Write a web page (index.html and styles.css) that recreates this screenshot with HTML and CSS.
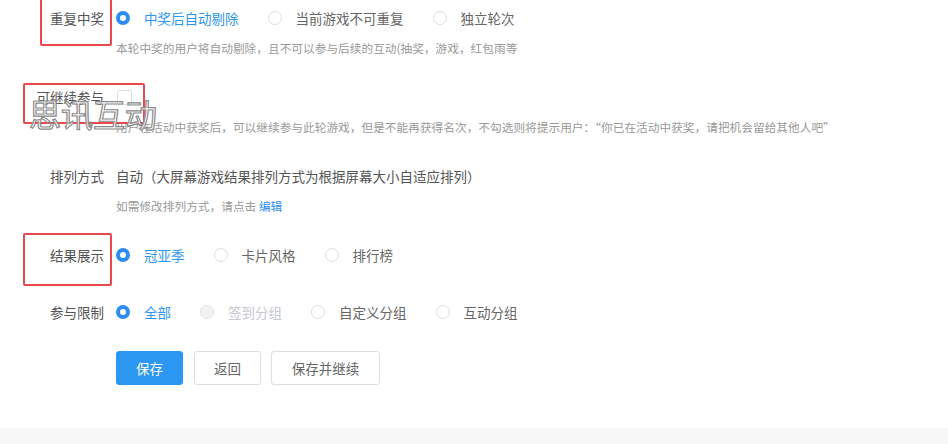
FILE: index.html
```html
<!DOCTYPE html>
<html lang="zh-CN">
<head>
    <meta charset="UTF-8">
    <meta name="viewport" content="width=device-width, initial-scale=1.0">
    <title>游戏设置</title>
    <link rel="stylesheet" href="styles.css">
</head>
<body>

    <div class="card">
        <!-- 重复中奖 -->
        <div class="form-item">
            <div class="control">
                <span class="label">重复中奖</span>
                <label class="radio checked"><i></i>中奖后自动剔除</label>
                <label class="radio"><i></i>当前游戏不可重复</label>
                <label class="radio"><i></i>独立轮次</label>
            </div>
            <p class="hint">本轮中奖的用户将自动剔除，且不可以参与后续的互动(抽奖，游戏，红包雨等</p>
        </div>

        <!-- 可继续参与 -->
        <div class="form-item">
            <div class="control">
                <span class="label">可继续参与</span>
                <span class="checkbox"></span>
            </div>
            <p class="hint">用户在活动中获奖后，可以继续参与此轮游戏，但是不能再获得名次，不勾选则将提示用户：“你已在活动中获奖，请把机会留给其他人吧”</p>
        </div>

        <!-- 排列方式 -->
        <div class="form-item">
            <div class="control">
                <span class="label">排列方式</span>
                <span class="value">自动（大屏幕游戏结果排列方式为根据屏幕大小自适应排列）</span>
            </div>
            <p class="hint">如需修改排列方式，请点击 <a class="link">编辑</a></p>
        </div>

        <!-- 结果展示 -->
        <div class="form-item">
            <div class="control">
                <span class="label">结果展示</span>
                <label class="radio checked"><i></i>冠亚季</label>
                <label class="radio"><i></i>卡片风格</label>
                <label class="radio"><i></i>排行榜</label>
            </div>
        </div>

        <!-- 参与限制 -->
        <div class="form-item">
            <div class="control">
                <span class="label">参与限制</span>
                <label class="radio checked"><i></i>全部</label>
                <label class="radio disabled"><i></i>签到分组</label>
                <label class="radio"><i></i>自定义分组</label>
                <label class="radio"><i></i>互动分组</label>
            </div>
        </div>

        <div class="actions">
            <button class="btn primary">保存</button>
            <button class="btn">返回</button>
            <button class="btn wide">保存并继续</button>
        </div>

        <!-- annotations -->
        <div class="mark mark-1"></div>
        <div class="mark mark-2"></div>
        <div class="mark mark-3"></div>
        <div class="watermark">思讯互动</div>
    </div>

</body>
</html>
```

FILE: styles.css
```css
body {
    margin: 0;
    padding: 0;
    font-family: "Noto Sans CJK SC", "Noto Sans", sans-serif;
    background: linear-gradient(#ececef, #f7f7f8 16px);
    height: 444px;
    overflow: hidden;
}
.card {
    position: relative;
    background: #fff;
    height: 428px;
    box-sizing: border-box;
    padding-bottom: 43px;
}
.form-item {
    margin-bottom: 21px;
}
.control {
    display: flex;
    align-items: center;
    height: 36px;
    font-size: 13.5px;
    color: #555;
}
.label {
    width: 104px;
    padding-right: 12px;
    box-sizing: content-box;
    text-align: right;
    color: #555;
    flex-shrink: 0;
}
.value {
    color: #555;
}
.radio {
    display: flex;
    align-items: center;
    margin-right: 29px;
    color: #666;
}
.radio i {
    width: 14px;
    height: 14px;
    box-sizing: border-box;
    border: 1px solid #dcdee2;
    border-radius: 50%;
    margin-right: 14px;
    background: #fff;
}
.radio.checked {
    color: #2d96f0;
}
.radio.checked i {
    border: 4px solid #2d8cf0;
    background: #fff;
}
.radio.disabled {
    color: #c5c8ce;
}
.radio.disabled i {
    background: #f3f3f3;
    border-color: #e3e3e3;
}
.checkbox {
    width: 13px;
    height: 13px;
    border: 1px solid #dcdee2;
    border-radius: 2px;
    margin-left: 1px;
}
.hint {
    margin: 1px 0 0 116px;
    line-height: 21px;
    font-size: 11.7px;
    color: #999;
    white-space: nowrap;
}
.link {
    color: #2d8cf0;
}
.actions {
    display: flex;
    gap: 10px;
    padding-left: 116px;
}
.btn {
    height: 34px;
    width: 67px;
    font-family: inherit;
    font-size: 13.5px;
    color: #666;
    background: #fff;
    border: 1px solid #dcdee2;
    border-radius: 3px;
    padding: 0;
}
.btn.primary {
    background: #2c97f0;
    border-color: #2c97f0;
    color: #fff;
    margin-right: 1px;
}
.btn.wide {
    width: 109px;
}
/* red annotation boxes */
.mark {
    position: absolute;
    border: 2.5px solid #e8484e;
    border-radius: 2px;
    box-sizing: border-box;
}
.mark-1 {
    left: 40px;
    top: -4px;
    width: 72px;
    height: 50px;
}
.mark-2 {
    left: 23px;
    top: 83px;
    width: 122px;
    height: 41px;
}
.mark-3 {
    left: 23px;
    top: 233px;
    width: 89px;
    height: 53px;
}
.watermark {
    position: absolute;
    left: 29px;
    top: 93px;
    font-size: 32px;
    line-height: 40px;
    color: rgba(255, 255, 255, 0.8);
    -webkit-text-stroke: 1.2px #8a8a8a;
}
```
